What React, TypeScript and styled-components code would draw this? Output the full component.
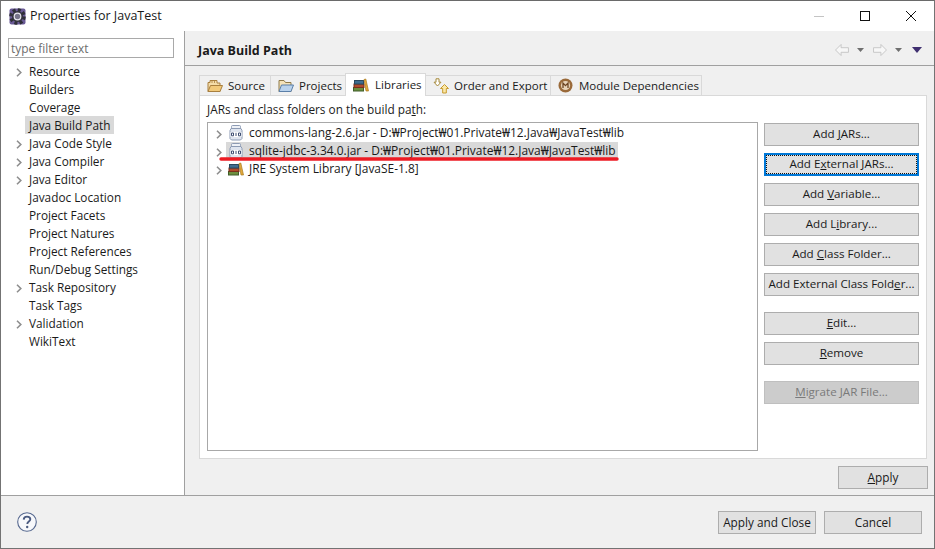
// App.tsx
// Eclipse "Properties for JavaTest" dialog, Java Build Path page.
import type { ReactNode } from 'react';
import styled, { createGlobalStyle } from 'styled-components';

const GlobalStyle = createGlobalStyle`
  html, body { margin: 0; padding: 0; background: #fff; }
  * { box-sizing: border-box; }
`;

const Window = styled.div`
  width: 935px;
  height: 549px;
  border: 1px solid #737373;
  border-top-color: #6a6a6a;
  background: #f0f0f0;
  display: flex;
  flex-direction: column;
  overflow: hidden;
  font: 11.8px/18px 'Open Sans', 'Noto Sans', sans-serif;
  color: #1a1a1a;
`;

const TitleBar = styled.div`
  height: 30px;
  flex: none;
  background: #fff;
  display: flex;
  align-items: center;
  padding-left: 8px;
  font-size: 12.5px;
`;

const TitleText = styled.div`
  flex: 1;
  margin-left: 4px;
`;

const WindowButton = styled.div`
  width: 46px;
  height: 30px;
  display: flex;
  align-items: center;
  justify-content: center;
`;

const Main = styled.div`
  flex: 1;
  min-height: 0;
  display: flex;
`;

const Sidebar = styled.div`
  width: 184px;
  flex: none;
  background: #fff;
  border-right: 1px solid #a0a0a0;
  padding: 7px 0 0 7px;
`;

const FilterBox = styled.div`
  width: 166px;
  height: 20px;
  border: 1px solid #a9a9a9;
  padding-left: 2px;
  font-size: 11.9px;
  line-height: 18px;
  color: #6d6d6d;
  margin-bottom: 4px;
`;

const TreeList = styled.div`
  display: flex;
  flex-direction: column;
`;

const TreeRow = styled.div<{ $selected?: boolean }>`
  height: 18px;
  display: flex;
  align-items: center;
  position: relative;
  white-space: nowrap;
  margin-left: 17px;
  padding-left: 4px;
  background: ${({ $selected }) => ($selected ? '#d9d9d9' : 'transparent')};
  width: ${({ $selected }) => ($selected ? '89px' : 'auto')};
`;

const TreeArrow = styled.svg`
  position: absolute;
  left: -9px;
  top: 6px;
`;

const Content = styled.div`
  flex: 1;
  min-width: 0;
  display: flex;
  flex-direction: column;
`;

const PageHeader = styled.div`
  height: 35px;
  flex: none;
  display: flex;
  align-items: center;
  justify-content: space-between;
  padding: 6px 12px 0 13px;
  font-weight: 700;
  font-size: 12.5px;
  border-bottom: 1px solid #a0a0a0;
`;

const HistoryNav = styled.div`
  display: flex;
  align-items: center;
  margin-bottom: 3px;
`;

const HistoryArrowIcon = styled.svg<{ $flip?: boolean }>`
  transform: ${({ $flip }) => ($flip ? 'scaleX(-1)' : 'none')};
`;

const SmallDrop = styled.svg<{ $gap: number; $after: number }>`
  margin: 0 ${({ $after }) => $after}px 0 ${({ $gap }) => $gap}px;
`;

const TabStrip = styled.div`
  margin: 7px 0 0 15px;
  height: 23px;
  display: flex;
  align-items: flex-end;
  position: relative;
  z-index: 1;
  font-size: 11.5px;
`;

const Tab = styled.div<{ $active?: boolean; $width: number; $gap: number }>`
  width: ${({ $width }) => $width}px;
  height: ${({ $active }) => ($active ? '23px' : '21px')};
  display: flex;
  align-items: center;
  gap: ${({ $gap }) => $gap}px;
  padding-left: 7px;
  background: ${({ $active }) => ($active ? '#fff' : '#f0f0f0')};
  border: 1px solid #d9d9d9;
  border-bottom: ${({ $active }) => ($active ? 'none' : '1px solid #d9d9d9')};
  margin-left: -1px;
  white-space: nowrap;
`;

const TabPanel = styled.div`
  margin: -1px 7px 0 14px;
  height: 364px;
  flex: none;
  background: #fff;
  border: 1px solid #d9d9d9;
  padding: 4px 7px 7px 7px;
  display: flex;
  flex-direction: column;
`;

const PanelLabel = styled.div`
  height: 18px;
  margin-bottom: 4px;
  white-space: nowrap;
`;

const PanelBody = styled.div`
  flex: 1;
  min-height: 0;
  display: flex;
  gap: 6px;
`;

const JarList = styled.div`
  width: 551px;
  flex: none;
  border: 1px solid #a8a8a8;
  background: #fff;
  padding: 1px 0 0 8px;
  position: relative;
  font-size: 11.95px;
`;

const JarRow = styled.div`
  height: 18px;
  display: flex;
  align-items: center;
  white-space: nowrap;
  gap: 4px;
`;

const RowChevron = styled.svg`
  flex: none;
  margin-top: 3px;
`;

const JarLabel = styled.div<{ $selected?: boolean }>`
  display: flex;
  align-items: center;
  height: 18px;
  gap: 5px;
  padding: 0 2px;
  background: ${({ $selected }) => ($selected ? '#d9d9d9' : 'transparent')};
`;

const RedUnderline = styled.svg`
  position: absolute;
  left: 11px;
  top: 33px;
`;

const ButtonColumn = styled.div`
  width: 155px;
  flex: none;
  display: flex;
  flex-direction: column;
  padding-top: 1px;
  font-size: 11.6px;
`;

const Button = styled.div<{ $width?: number; $focused?: boolean; $disabled?: boolean; $gap?: number }>`
  height: 23px;
  flex: none;
  width: ${({ $width }) => ($width ? `${$width}px` : 'auto')};
  margin-top: ${({ $gap }) => $gap ?? 0}px;
  padding-bottom: 1px;
  display: flex;
  align-items: center;
  justify-content: center;
  white-space: nowrap;
  background: ${({ $disabled }) => ($disabled ? '#cccccc' : '#e1e1e1')};
  color: ${({ $disabled }) => ($disabled ? '#7a7a7a' : '#1a1a1a')};
  border: 1px solid ${({ $disabled }) => ($disabled ? '#bfbfbf' : '#adadad')};
  ${({ $focused }) =>
    $focused &&
    `
    border: 2px solid #0078d7;
    outline: 1px dotted #111;
    outline-offset: -3px;
  `}
`;

const ApplyRow = styled.div`
  display: flex;
  justify-content: flex-end;
  padding: 7px 6px 0 0;
`;

const BottomBar = styled.div`
  height: 53px;
  flex: none;
  border-top: 1px solid #a0a0a0;
  display: flex;
  align-items: center;
  padding: 0 12px 0 16px;
  gap: 8px;
`;

const Spacer = styled.div`
  flex: 1;
`;

const GearIcon = () => (
  <svg width="17" height="17" viewBox="0 0 17 17">
    <rect x="0.5" y="0.5" width="16" height="16" rx="2" fill="#6a5a96" />
    <circle cx="8.5" cy="8.5" r="6.6" fill="none" stroke="#2f2f38" strokeWidth="3.4" strokeDasharray="3 2.2" />
    <circle cx="8.5" cy="8.5" r="5.6" fill="#34343e" />
    <circle cx="8.5" cy="8.5" r="3.9" fill="#e9e7ef" />
    <circle cx="8.5" cy="8.5" r="2.7" fill="#77748a" />
  </svg>
);

const HistoryArrow = ({ flip }: { flip?: boolean }) => (
  <HistoryArrowIcon $flip={flip} width="14" height="12" viewBox="0 0 15 13">
    <path d="M0.5 6.5L6.5 0.5V4H14.5V9H6.5V12.5z" fill="#f7f7f7" stroke="#c4c4c4" />
  </HistoryArrowIcon>
);

const ChevronIcon = () => (
  <RowChevron width="6" height="9" viewBox="0 0 6 9">
    <path d="M1 0.8L4.8 4.5L1 8.2" fill="none" stroke="#8e8e8e" strokeWidth="1.6" />
  </RowChevron>
);

const JarIcon = () => (
  <svg width="16" height="16" viewBox="-1 0 16 16">
    <rect x="2.5" y="0.5" width="9" height="3" rx="1" fill="#eef1f6" stroke="#8d9bb4" />
    <path d="M2 3.5H12L13 5.5V13.5L11.5 15H2.5L1 13.5V5.5z" fill="#dfe5ef" stroke="#8d9bb4" />
    <rect x="1.5" y="7" width="11" height="5" fill="#fff" />
    <path d="M2.5 8h2v2.8h-2zM7 7.8v3.2M9.5 8h2v2.8h-2z" fill="none" stroke="#3f4f73" strokeWidth="1" />
  </svg>
);

const BooksIcon = () => (
  <svg width="16" height="14" viewBox="0 0 16 14">
    <rect x="0.5" y="9.5" width="10" height="3.5" fill="#6d8f3f" stroke="#3f5d2a" />
    <rect x="1" y="6" width="10" height="3.5" fill="#b04a2a" stroke="#7a2f1a" />
    <rect x="1.5" y="2.5" width="9" height="3.5" fill="#3f6d8f" stroke="#29485f" />
    <path d="M11 1.5L12.8 1L15.5 13H13z" fill="#e3a93a" stroke="#a87a20" strokeWidth="0.7" />
  </svg>
);

const PackageFolderIcon = () => (
  <svg width="16" height="14" viewBox="0 0 16 14">
    <path d="M1 12.5V3.5H3V1.5H10V4H13V12.5z" fill="#f4dca8" stroke="#a87f3e" />
    <path d="M1 12.5L3.5 6.5H15.5L13 12.5z" fill="#f1c97a" stroke="#a87f3e" />
    <path d="M5 1.8V4M7.5 1.8V4" stroke="#a87f3e" strokeWidth="0.8" />
  </svg>
);

const ProjectFolderIcon = () => (
  <svg width="16" height="14" viewBox="0 0 16 14">
    <path d="M1 12.5V1.5H6L7.5 3.5H13V12.5z" fill="#f4e2b8" stroke="#8f7a4a" />
    <path d="M1 12.5L3.5 6H15.5L13 12.5z" fill="#b9d2ec" stroke="#5b7fa8" />
  </svg>
);

const OrderIcon = () => (
  <svg width="16" height="16" viewBox="0 0 16 16">
    <path d="M4.5 8L1 4.2H3V0.8H6V4.2H8z" fill="#fff" stroke="#a5893a" />
    <path d="M11.5 6.5L15.5 10.5H13.3V15H9.7V10.5H7.5z" fill="#fbe8a8" stroke="#c79a2c" />
  </svg>
);

const ModuleIcon = () => (
  <svg width="15" height="15" viewBox="0 0 15 15">
    <circle cx="7.5" cy="7.5" r="7" fill="#9a6a3a" />
    <circle cx="7.5" cy="7.5" r="4.6" fill="#e8d3b8" />
    <path d="M5 10V5L7.5 7.6L10 5V10" fill="none" stroke="#6e4522" strokeWidth="1.3" />
  </svg>
);

const HelpIcon = () => (
  <svg width="20" height="20" viewBox="0 0 20 20">
    <circle cx="10" cy="10" r="9.3" fill="#f7f8fb" stroke="#56688f" strokeWidth="1.1" />
    <path d="M6.7 7.6C6.8 5.6 8.2 4.6 10 4.6C11.9 4.6 13.3 5.7 13.3 7.3C13.3 9.5 10.3 9.6 10.3 11.9" fill="none" stroke="#4a5a80" strokeWidth="1.9" />
    <circle cx="10.2" cy="15" r="1.2" fill="#4a5a80" />
  </svg>
);

const treeItems: { label: string; arrow?: boolean; selected?: boolean }[] = [
  { label: 'Resource', arrow: true },
  { label: 'Builders' },
  { label: 'Coverage' },
  { label: 'Java Build Path', selected: true },
  { label: 'Java Code Style', arrow: true },
  { label: 'Java Compiler', arrow: true },
  { label: 'Java Editor', arrow: true },
  { label: 'Javadoc Location' },
  { label: 'Project Facets' },
  { label: 'Project Natures' },
  { label: 'Project References' },
  { label: 'Run/Debug Settings' },
  { label: 'Task Repository', arrow: true },
  { label: 'Task Tags' },
  { label: 'Validation', arrow: true },
  { label: 'WikiText' },
];

const tabs: { label: string; icon: ReactNode; width: number; gap: number; active?: boolean }[] = [
  { label: 'Source', icon: <PackageFolderIcon />, width: 72, gap: 5 },
  { label: 'Projects', icon: <ProjectFolderIcon />, width: 76, gap: 5 },
  { label: 'Libraries', icon: <BooksIcon />, width: 81, gap: 6, active: true },
  { label: 'Order and Export', icon: <OrderIcon />, width: 126, gap: 5 },
  { label: 'Module Dependencies', icon: <ModuleIcon />, width: 152, gap: 6 },
];

const sidePath = 'D:₩Project₩01.Private₩12.Java₩JavaTest₩lib';

const sideButtons: { key: string; label: ReactNode; gap: number; focused?: boolean; disabled?: boolean }[] = [
  { key: 'jars', label: <span>Add <u>J</u>ARs...</span>, gap: 0 },
  { key: 'ext', label: <span>Add E<u>x</u>ternal JARs...</span>, gap: 7, focused: true },
  { key: 'var', label: <span>Add <u>V</u>ariable...</span>, gap: 7 },
  { key: 'lib', label: <span>Add L<u>i</u>brary...</span>, gap: 7 },
  { key: 'cls', label: <span>Add <u>C</u>lass Folder...</span>, gap: 7 },
  { key: 'extcls', label: <span>Add External Class Fold<u>e</u>r...</span>, gap: 7 },
  { key: 'edit', label: <span><u>E</u>dit...</span>, gap: 16 },
  { key: 'rem', label: <span><u>R</u>emove</span>, gap: 7 },
  { key: 'mig', label: <span><u>M</u>igrate JAR File...</span>, gap: 16, disabled: true },
];

export default function App() {
  return (
    <>
      <GlobalStyle />
      <Window>
        <TitleBar>
          <GearIcon />
          <TitleText>Properties for JavaTest</TitleText>
          <WindowButton>
            <svg width="10" height="10" viewBox="0 0 10 10">
              <path d="M0 5.5h10" stroke="#c4c4c4" />
            </svg>
          </WindowButton>
          <WindowButton>
            <svg width="10" height="10" viewBox="0 0 10 10">
              <rect x="0.5" y="0.5" width="9" height="9" fill="none" stroke="#111" />
            </svg>
          </WindowButton>
          <WindowButton>
            <svg width="10" height="10" viewBox="0 0 10 10">
              <path d="M0 0L10 10M10 0L0 10" stroke="#111" />
            </svg>
          </WindowButton>
        </TitleBar>
        <Main>
          <Sidebar>
            <FilterBox>type filter text</FilterBox>
            <TreeList>
              {treeItems.map((item) => (
                <TreeRow key={item.label} $selected={item.selected}>
                  {item.arrow && (
                    <TreeArrow width="6" height="9" viewBox="0 0 6 9">
                      <path d="M1 0.8L4.8 4.5L1 8.2" fill="none" stroke="#8e8e8e" strokeWidth="1.6" />
                    </TreeArrow>
                  )}
                  {item.label}
                </TreeRow>
              ))}
            </TreeList>
          </Sidebar>
          <Content>
            <PageHeader>
              <span>Java Build Path</span>
              <HistoryNav>
                <HistoryArrow />
                <SmallDrop $gap={8} $after={9} width="7" height="4" viewBox="0 0 7 4">
                  <path d="M0 0h7L3.5 4z" fill="#6f6f6f" />
                </SmallDrop>
                <HistoryArrow flip />
                <SmallDrop $gap={8} $after={10} width="7" height="4" viewBox="0 0 7 4">
                  <path d="M0 0h7L3.5 4z" fill="#6f6f6f" />
                </SmallDrop>
                <svg width="10" height="6" viewBox="0 0 10 6">
                  <path d="M0 0h10L5 6z" fill="#3f2f70" />
                </svg>
              </HistoryNav>
            </PageHeader>
            <TabStrip>
              {tabs.map((tab) => (
                <Tab key={tab.label} $active={tab.active} $width={tab.width} $gap={tab.gap}>
                  {tab.icon}
                  {tab.label}
                </Tab>
              ))}
            </TabStrip>
            <TabPanel>
              <PanelLabel>
                JARs and class folders on the build pa<u>t</u>h:
              </PanelLabel>
              <PanelBody>
                <JarList>
                  <JarRow>
                    <ChevronIcon />
                    <JarLabel>
                      <JarIcon />
                      commons-lang-2.6.jar - {sidePath}
                    </JarLabel>
                  </JarRow>
                  <JarRow>
                    <ChevronIcon />
                    <JarLabel $selected>
                      <JarIcon />
                      sqlite-jdbc-3.34.0.jar - {sidePath}
                    </JarLabel>
                  </JarRow>
                  <JarRow>
                    <ChevronIcon />
                    <JarLabel>
                      <BooksIcon />
                      JRE System Library [JavaSE-1.8]
                    </JarLabel>
                  </JarRow>
                  <RedUnderline width="402" height="6" viewBox="0 0 402 6">
                    <path d="M2 3H398" stroke="#ed1c24" strokeWidth="3.4" strokeLinecap="round" />
                  </RedUnderline>
                </JarList>
                <ButtonColumn>
                  {sideButtons.map((button) => (
                    <Button key={button.key} $gap={button.gap} $focused={button.focused} $disabled={button.disabled}>
                      {button.label}
                    </Button>
                  ))}
                </ButtonColumn>
              </PanelBody>
            </TabPanel>
            <ApplyRow>
              <Button $width={90}>
                <span>
                  <u>A</u>pply
                </span>
              </Button>
            </ApplyRow>
          </Content>
        </Main>
        <BottomBar>
          <HelpIcon />
          <Spacer />
          <Button $width={98}>Apply and Close</Button>
          <Button $width={98}>Cancel</Button>
        </BottomBar>
      </Window>
    </>
  );
}
